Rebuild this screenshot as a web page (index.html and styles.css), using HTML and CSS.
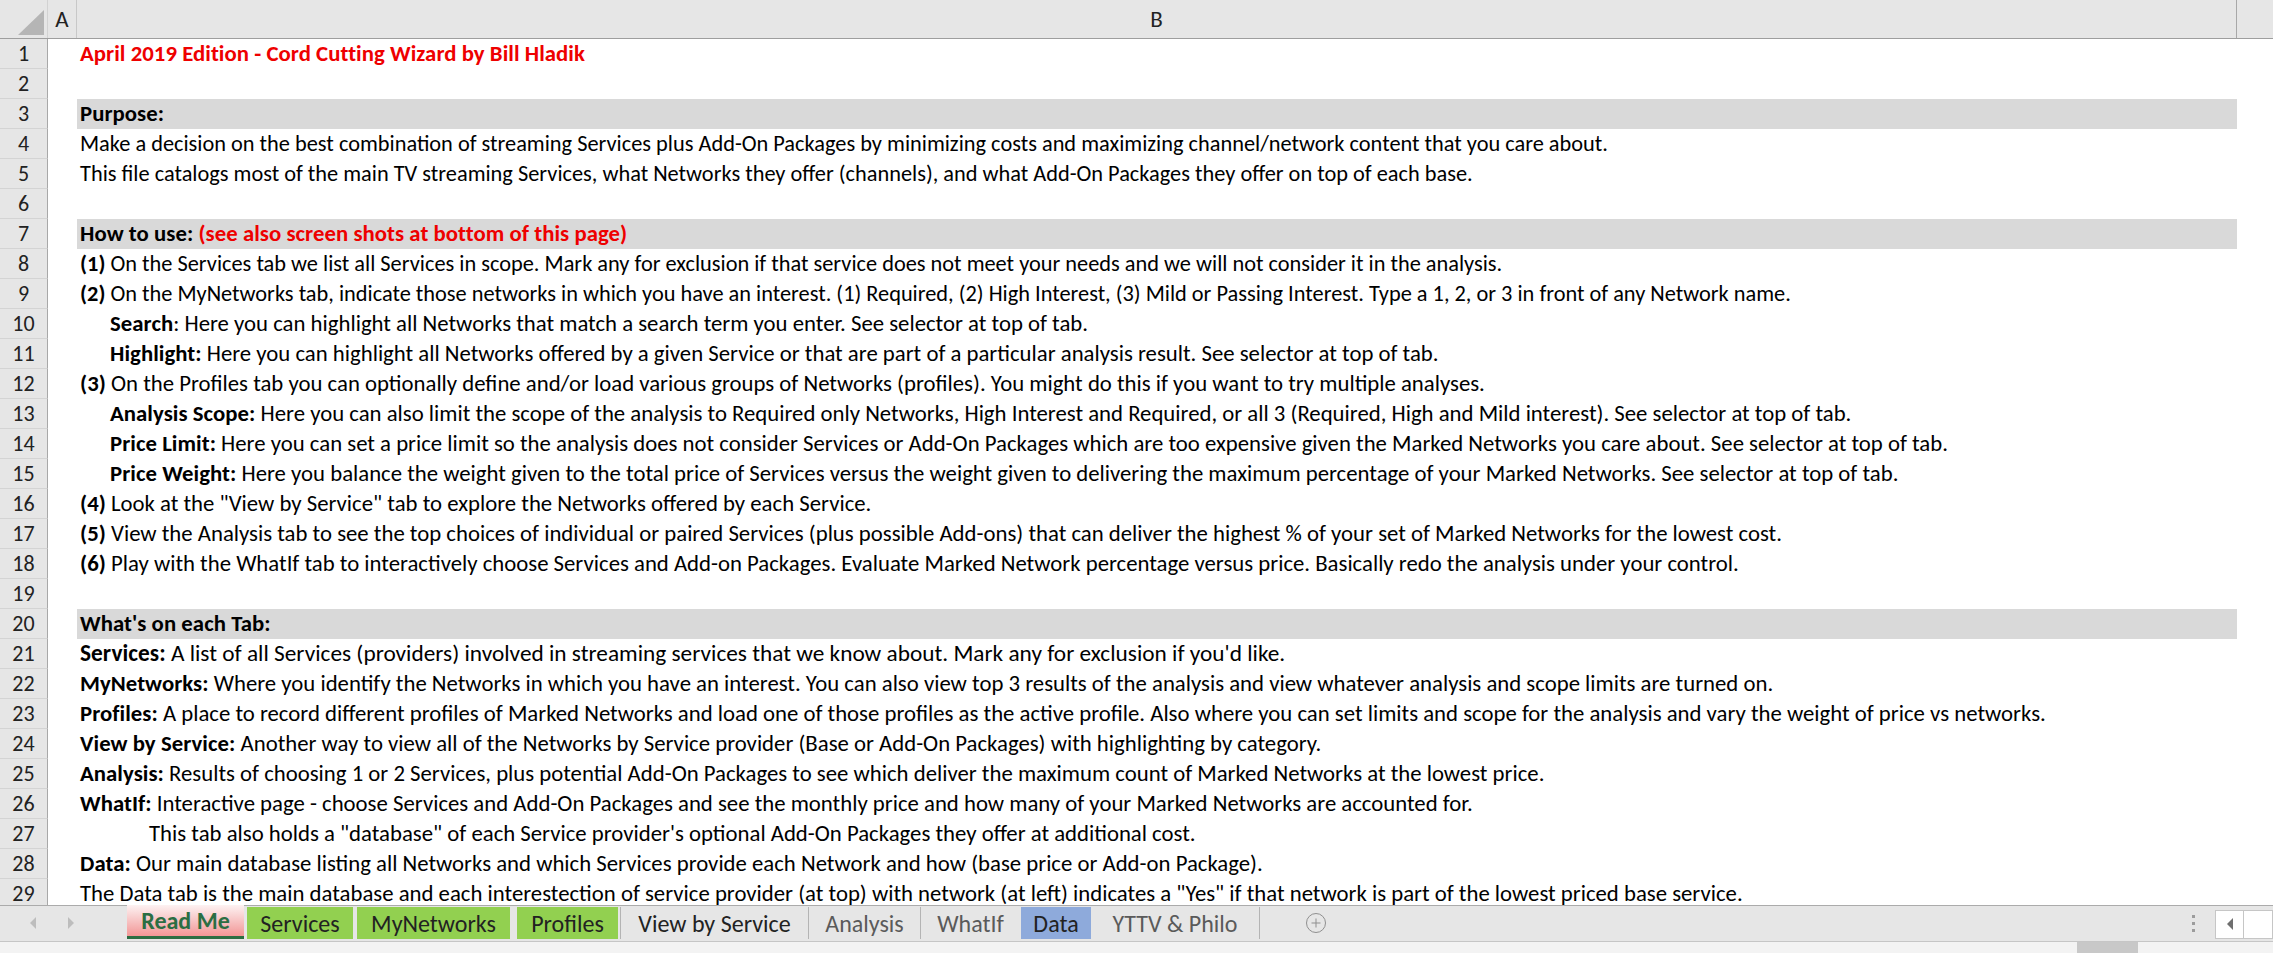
FILE: index.html
```html
<!DOCTYPE html>
<html lang="en">
<head>
<meta charset="utf-8">
<title>Read Me - Cord Cutting Wizard</title>
<link rel="stylesheet" href="styles.css">
</head>
<body>
<div class="sheet">
  <div class="colhead">
    <div class="corner"><svg width="48" height="39" viewBox="0 0 48 39"><polygon points="44,10 44,35 18,35" fill="#b5b5b5"/></svg></div>
    <div class="ch ch-a">A</div>
    <div class="ch ch-b">B</div>
    <div class="ch ch-c"></div>
  </div>
  <div class="rows">
    <div class="row"><div class="rn">1</div><div class="ca"></div><div class="cb"><span class="red b">April 2019 Edition - Cord Cutting Wizard by Bill Hladik</span></div></div>
    <div class="row"><div class="rn">2</div><div class="ca"></div><div class="cb"></div></div>
    <div class="row"><div class="rn">3</div><div class="ca"></div><div class="cb band"><span class="b">Purpose:</span></div></div>
    <div class="row"><div class="rn">4</div><div class="ca"></div><div class="cb sm">Make a decision on the best combination of streaming Services plus Add-On Packages by minimizing costs and maximizing channel/network content that you care about.</div></div>
    <div class="row"><div class="rn">5</div><div class="ca"></div><div class="cb sm">This file catalogs most of the main TV streaming Services, what Networks they offer (channels), and what Add-On Packages they offer on top of each base.</div></div>
    <div class="row"><div class="rn">6</div><div class="ca"></div><div class="cb"></div></div>
    <div class="row"><div class="rn">7</div><div class="ca"></div><div class="cb band"><span class="b">How to use: </span><span class="red b">(see also screen shots at bottom of this page)</span></div></div>
    <div class="row"><div class="rn">8</div><div class="ca"></div><div class="cb sm"><span class="b">(1)</span> On the Services tab we list all Services in scope. Mark any for exclusion if that service does not meet your needs and we will not consider it in the analysis.</div></div>
    <div class="row"><div class="rn">9</div><div class="ca"></div><div class="cb sm"><span class="b">(2)</span> On the MyNetworks tab, indicate those networks in which you have an interest. (1) Required, (2) High Interest, (3) Mild or Passing Interest. Type a 1, 2, or 3 in front of any Network name.</div></div>
    <div class="row"><div class="rn">10</div><div class="ca"></div><div class="cb ind1"><span class="b">Search</span>: Here you can highlight all Networks that match a search term you enter. See selector at top of tab.</div></div>
    <div class="row"><div class="rn">11</div><div class="ca"></div><div class="cb ind1"><span class="b">Highlight:</span> Here you can highlight all Networks offered by a given Service or that are part of a particular analysis result. See selector at top of tab.</div></div>
    <div class="row"><div class="rn">12</div><div class="ca"></div><div class="cb"><span class="b">(3)</span> On the Profiles tab you can optionally define and/or load various groups of Networks (profiles). You might do this if you want to try multiple analyses.</div></div>
    <div class="row"><div class="rn">13</div><div class="ca"></div><div class="cb ind1"><span class="b">Analysis Scope:</span> Here you can also limit the scope of the analysis to Required only Networks, High Interest and Required, or all 3 (Required, High and Mild interest). See selector at top of tab.</div></div>
    <div class="row"><div class="rn">14</div><div class="ca"></div><div class="cb ind1"><span class="b">Price Limit:</span> Here you can set a price limit so the analysis does not consider Services or Add-On Packages which are too expensive given the Marked Networks you care about. See selector at top of tab.</div></div>
    <div class="row"><div class="rn">15</div><div class="ca"></div><div class="cb ind1"><span class="b">Price Weight:</span> Here you balance the weight given to the total price of Services versus the weight given to delivering the maximum percentage of your Marked Networks. See selector at top of tab.</div></div>
    <div class="row"><div class="rn">16</div><div class="ca"></div><div class="cb"><span class="b">(4)</span> Look at the "View by Service" tab to explore the Networks offered by each Service.</div></div>
    <div class="row"><div class="rn">17</div><div class="ca"></div><div class="cb"><span class="b">(5)</span> View the Analysis tab to see the top choices of individual or paired Services (plus possible Add-ons) that can deliver the highest % of your set of Marked Networks for the lowest cost.</div></div>
    <div class="row"><div class="rn">18</div><div class="ca"></div><div class="cb"><span class="b">(6)</span> Play with the WhatIf tab to interactively choose Services and Add-on Packages. Evaluate Marked Network percentage versus price. Basically redo the analysis under your control.</div></div>
    <div class="row"><div class="rn">19</div><div class="ca"></div><div class="cb"></div></div>
    <div class="row"><div class="rn">20</div><div class="ca"></div><div class="cb band"><span class="b">What's on each Tab:</span></div></div>
    <div class="row"><div class="rn">21</div><div class="ca"></div><div class="cb lg"><span class="b">Services:</span> A list of all Services (providers) involved in streaming services that we know about. Mark any for exclusion if you'd like.</div></div>
    <div class="row"><div class="rn">22</div><div class="ca"></div><div class="cb"><span class="b">MyNetworks:</span> Where you identify the Networks in which you have an interest. You can also view top 3 results of the analysis and view whatever analysis and scope limits are turned on.</div></div>
    <div class="row"><div class="rn">23</div><div class="ca"></div><div class="cb"><span class="b">Profiles:</span> A place to record different profiles of Marked Networks and load one of those profiles as the active profile. Also where you can set limits and scope for the analysis and vary the weight of price vs networks.</div></div>
    <div class="row"><div class="rn">24</div><div class="ca"></div><div class="cb"><span class="b">View by Service:</span> Another way to view all of the Networks by Service provider (Base or Add-On Packages) with highlighting by category.</div></div>
    <div class="row"><div class="rn">25</div><div class="ca"></div><div class="cb"><span class="b">Analysis:</span> Results of choosing 1 or 2 Services, plus potential Add-On Packages to see which deliver the maximum count of Marked Networks at the lowest price.</div></div>
    <div class="row"><div class="rn">26</div><div class="ca"></div><div class="cb"><span class="b">WhatIf:</span> Interactive page - choose Services and Add-On Packages and see the monthly price and how many of your Marked Networks are accounted for.</div></div>
    <div class="row"><div class="rn">27</div><div class="ca"></div><div class="cb ind2">This tab also holds a "database" of each Service provider's optional Add-On Packages they offer at additional cost.</div></div>
    <div class="row"><div class="rn">28</div><div class="ca"></div><div class="cb"><span class="b">Data:</span> Our main database listing all Networks and which Services provide each Network and how (base price or Add-on Package).</div></div>
    <div class="row"><div class="rn">29</div><div class="ca"></div><div class="cb">The Data tab is the main database and each interestection of service provider (at top) with network (at left) indicates a "Yes" if that network is part of the lowest priced base service.</div></div>
  </div>
  <div class="tabbar">
    <div class="nav">
      <svg class="arr" width="8" height="12" viewBox="0 0 8 12"><polygon points="7,0 7,12 1,6" fill="#bdbdbd"/></svg>
      <svg class="arr" width="8" height="12" viewBox="0 0 8 12"><polygon points="1,0 1,12 7,6" fill="#bdbdbd"/></svg>
    </div>
    <div class="tab t-readme">Read Me</div>
    <div class="tab t-services green">Services</div>
    <div class="tab t-mynet green">MyNetworks</div>
    <div class="tab t-profiles green">Profiles</div>
    <div class="tab t-view sep">View by Service</div>
    <div class="tab t-analysis sep grey">Analysis</div>
    <div class="tab t-whatif grey">WhatIf</div>
    <div class="tab t-data blue">Data</div>
    <div class="tab t-yttv sep grey">YTTV &amp; Philo</div>
    <div class="addtab"><svg width="22" height="22" viewBox="0 0 22 22"><circle cx="11" cy="11" r="9.5" fill="none" stroke="#8f8f8f" stroke-width="1"/><path d="M11 6.5v9M6.5 11h9" stroke="#8f8f8f" stroke-width="1"/></svg></div>
    <div class="right">
      <div class="dots"><span></span><span></span><span></span></div>
      <div class="hscroll">
        <div class="hbtn"><svg width="8" height="12" viewBox="0 0 8 12"><polygon points="7,0 7,12 1,6" fill="#6f6f6f"/></svg></div>
        <div class="htrack"></div>
      </div>
    </div>
  </div>
  <div class="status"><div class="sthumb"></div></div>
</div>
</body>
</html>
```
FILE: styles.css
```css
* { box-sizing: border-box; }
html, body { margin: 0; padding: 0; }
body {
  width: 2273px;
  height: 953px;
  overflow: hidden;
  background: #fff;
  color: #000;
  font-family: Carlito, "Liberation Sans Narrow", "Open Sans", sans-serif;
  font-size: 22px;
}
.sheet { display: flex; flex-direction: column; height: 953px; }

.colhead {
  display: flex;
  flex: none;
  height: 39px;
  background: #e6e6e6;
  border-bottom: 1px solid #9e9e9e;
}
.corner { width: 48px; flex: none; border-right: 1px solid #d2d2d2; }
.corner svg { display: block; }
.ch { display: flex; align-items: center; justify-content: center; color: #222; font-size: 23px; }
.ch-a { width: 29px; flex: none; border-right: 1px solid #c8c8c8; }
.ch-b { width: 2160px; flex: none; border-right: 1px solid #a8a8a8; }
.ch-c { flex: 1; }

.rows { flex: none; height: 866px; overflow: hidden; }
.row { display: flex; height: 30px; }
.rn {
  width: 48px;
  flex: none;
  background: #e6e6e6;
  border-right: 1px solid #a8a8a8;
  border-bottom: 1px solid #d4d4d4;
  text-align: center;
  line-height: 30px;
  color: #222;
}
.ca { width: 29px; flex: none; }
.cb {
  width: 2160px;
  flex: none;
  padding-left: 3px;
  font-size: 22.75px;
  line-height: 29px;
  white-space: nowrap;
}
.cb.sm { font-size: 22.35px; }
.cb.lg { font-size: 23.3px; }
.band { background: #d9d9d9; }
.ind1 { padding-left: 33px; }
.ind2 { padding-left: 72px; }
.b { font-weight: bold; letter-spacing: 0.05px; }
.red { color: #ee0000; }

.tabbar {
  flex: none;
  height: 37px;
  display: flex;
  align-items: flex-start;
  background: #e6e6e6;
  border-top: 1px solid #ababab;
  border-bottom: 1px solid #c6c6c6;
  padding-top: 1px;
}
.nav { width: 127px; flex: none; height: 32px; display: flex; align-items: center; }
.nav .arr:first-child { margin-left: 29px; }
.nav .arr:last-child { margin-left: 30px; }
.tab {
  flex: none;
  height: 32px;
  display: flex;
  align-items: center;
  justify-content: center;
  font-size: 24px;
  color: #222;
  white-space: nowrap;
}
.green { background: #92d050; }
.blue { background: #8eaadb; }
.grey { color: #5a5a5a; }
.sep { border-right: 1px solid #b4b4b4; }
.t-readme {
  width: 117px;
  height: 34px;
  margin-top: -2px;
  font-weight: bold;
  color: #2b6e43;
  background: linear-gradient(#fdf2f2, #f29696);
  border-bottom: 3px solid #2b6e43;
}
.t-services { width: 106px; margin-left: 3px; }
.t-mynet { width: 153px; margin-left: 4px; }
.t-profiles { width: 103px; margin-left: 7px; border-right: 2px solid #e6e6e6; }
.t-view { width: 189px; border-left: 1px solid #b4b4b4; }
.t-analysis { width: 112px; }
.t-whatif { width: 99px; }
.t-data { width: 70px; margin-left: 1px; }
.t-yttv { width: 169px; }
.addtab { flex: none; height: 32px; display: flex; align-items: center; margin-left: 45px; }
.addtab svg { display: block; }

.right { margin-left: auto; display: flex; align-items: center; height: 32px; }
.dots { display: flex; flex-direction: column; gap: 4px; margin-right: 20px; }
.dots span { display: block; width: 3px; height: 3px; background: #9c9c9c; }
.hscroll { display: flex; height: 29px; margin-top: 2px; }
.hbtn {
  width: 29px;
  height: 29px;
  background: #fff;
  border: 1px solid #c6c6c6;
  display: flex;
  align-items: center;
  justify-content: center;
}
.htrack { width: 29px; height: 29px; background: #fff; border: 1px solid #c6c6c6; border-left: none; }

.status {
  flex: 1;
  background: #f3f3f3;
  display: flex;
  justify-content: flex-end;
}
.sthumb { width: 61px; height: 100%; background: #c8c8c8; margin-right: 135px; }
```
